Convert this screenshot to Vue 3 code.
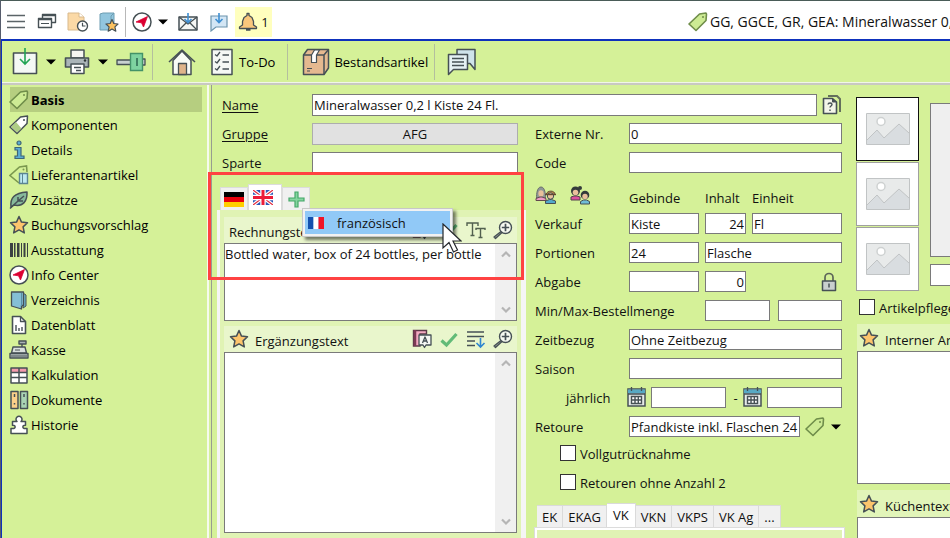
<script setup>
import { h, ref } from 'vue'

const S = 'stroke="#465055" stroke-linejoin="round"'
const starPath = 'M10 1.5l2.5 5.6 6 .7-4.4 4.1 1.2 6-5.3-3-5.3 3 1.2-6L1.500 7.800l6-.7z'
const calendar = `<rect x="1" y="2" width="17" height="17" fill="#e6ebe9" stroke="#465055" stroke-width="1.500"/><path d="M1 2.500h17v4H1z" fill="#58a9c4"/><path d="M4.500 0v4M14.500 0v4M1 7h17" stroke="#465055" stroke-width="1.300"/><path d="M4.500 9.500h10v7h-10zM4.500 13h10M8 9.500v7M11.300 9.500v7" fill="#fff" stroke="#465055" stroke-width="1.400"/>`

const icons = {
  menu: [20, 20, '<path d="M1 3.500h18M1 9.500h18M1 15.500h18" stroke="#5b6468" stroke-width="1.600"/>'],
  windows: [20, 20, `<g fill="#fff" ${S} stroke-width="1.400"><path d="M5.500 2.500h13v8h-13z"/><path d="M1.500 6.500h13v9h-13z"/></g><path d="M1.500 7.500h13M6 3.500h12" ${S} stroke-width="1.400"/><path d="M4 11.500h8" ${S}/>`],
  docClock: [22, 20, `<path d="M1 1h11l5 4v13H1z" fill="#fbd9a6" stroke="#d8b98c"/><path d="M12 1v4h5" fill="#fff" stroke="#d8b98c"/><circle cx="15.500" cy="14" r="5" fill="#fff" ${S} stroke-width="1.400"/><path d="M15.500 10.800V14h3" fill="none" ${S} stroke-width="1.200"/>`],
  bookStar: [20, 20, `<path d="M1 2l3-1h11v14l-3 3H1z" fill="#92c6de" stroke="#6d9db2"/><path d="M12 18V4l3-3" fill="none" stroke="#6d9db2"/><path d="M13 7.500l1.800 4 4.200.5-3.100 2.900.9 4.300-3.800-2.200-3.800 2.200.9-4.300L7 12l4.200-.5z" fill="#fcc25f" ${S} stroke-width="1.200"/>`],
  compass: [20, 20, `<circle cx="10" cy="10" r="9" fill="#fff" ${S} stroke-width="1.500"/><path d="M15.500 4.500L11.500 15 9.500 10.800 4 10z" fill="#dc0032" stroke="#dc0032" stroke-width=".8"/>`],
  caret: [10, 6, '<path d="M0 .5h10L5 5.500z" fill="#000"/>'],
  mail: [20, 20, `<path d="M1 5h18v13H1z" fill="#f5f6f4" ${S} stroke-width="1.500"/><path d="M1 5l9 7 9-7M1 18l7-7M19 18l-7-7" fill="none" ${S} stroke-width="1.300"/><path d="M10 1v9M6.500 7l3.500 3.500L13.500 7" fill="none" stroke="#3f8fd2" stroke-width="1.600"/>`],
  chatDown: [20, 20, '<path d="M2 4h16v11H7l-5 4z" fill="#d3e6f5" stroke="#6c94ad" stroke-width="1.200"/><path d="M10 1v9M6.500 7l3.500 3.500L13.500 7" fill="none" stroke="#3f8fd2" stroke-width="1.600"/>'],
  bell: [20, 20, `<path d="M9 1.500h2v2l3 2 1.500 4V13l3 2v1.500H1.500V15l3-2V9.500L6 5.500l3-2z" fill="#fac77c" ${S} stroke-width="1.300"/><path d="M8 17.500h4.500" stroke="#465055" stroke-width="2.500"/>`],
  tag: [20, 20, '<path d="M1 12L11.500 2l6.500-1 .5 1-.5 6.500L8 18.500z" fill="#cdeb94" stroke="#6f8d4a" stroke-width="1.600" stroke-linejoin="round"/><circle cx="15" cy="5" r="1" fill="#6f8d4a"/>'],
  tagWhite: [20, 20, `<path d="M1 12L11.500 2l7-1-.5 7.500L8 18.500z" fill="#fff" ${S} stroke-width="1.500"/><path d="M2 12l5-5 5.500 6.500L8 17.500z" fill="#aecd84"/><circle cx="15" cy="5" r="1" fill="#465055"/>`],
  info: [20, 20, '<g fill="#5badd3" stroke="#3f6678" stroke-width="1.200"><circle cx="10" cy="3" r="2"/><path d="M6 7.500h6V16h3v2.500H6V16h2.500v-6H6z"/></g>'],
  supplier: [20, 20, '<path d="M10 18L1 10.500 10.500 2l7-1 .5 6" fill="none" stroke="#7b984f" stroke-width="1.600"/><circle cx="14.500" cy="4.500" r="1" fill="#7b984f"/><path d="M10.500 8.500h8v10h-8z" fill="#bdeaf2" stroke="#5b8593" stroke-width="1.400"/><path d="M13.500 9v9" stroke="#5b8593"/>'],
  leaf: [20, 20, `<path d="M2 17C1 8 5 3 18 2c.5 9-4 15-13 13z" fill="#86b99b" ${S} stroke-width="1.500"/><path d="M1 18.500L9 11l6-5M9 7v4h5" fill="none" ${S} stroke-width="1.500"/>`],
  star: [20, 20, `<path d="${starPath}" fill="#fdc56c" ${S} stroke-width="1.500"/>`],
  barcode: [20, 20, '<path d="M1 3h3v14H1zM5 3h1.500v14H5zM8 3h2.500v14H8zM12 3h1v14h-1zM14.500 3h2v14h-2zM18 3h1v14h-1z" fill="#3a4142"/>'],
  folder: [20, 20, `<path d="M14 3l3 2v11l-3 2z" fill="#6fb0c8" ${S}/><path d="M2.500 2h12v13.500h-2V19l-10-3z" fill="#84bfd6" ${S} stroke-width="1.300"/><path d="M12.500 3v13" stroke="#5a8ea3"/>`],
  sheet: [20, 20, `<path d="M3.500 1.500h8l5 5v12h-13z" fill="#fff" ${S} stroke-width="1.600"/><path d="M11.500 1.500v5h5" fill="none" ${S} stroke-width="1.300"/><path d="M7 10v6M10 13v3M13 12v4" stroke="#465055" stroke-width="1.400"/>`],
  register: [20, 20, `<path d="M10 1h7v3h-7zM13 4v3" fill="#a9b4b5" ${S} stroke-width="1.400"/><path d="M4 7h12l1.500 6h-15z" fill="#d8dfdd" ${S} stroke-width="1.400"/><path d="M1 13.500h18V18H1z" fill="#b6c1c0" ${S} stroke-width="1.400"/><path d="M6 10h5M2 16h16" stroke="#465055"/>`],
  table: [20, 20, `<path d="M2 3h16v15H2z" fill="#fff"/><path d="M2 3h16v4H2z" fill="#f39aac"/><path d="M2 3h16v15H2zM2 7.500h16M2 12.500h16M10 3v15" fill="none" ${S} stroke-width="1.500"/>`],
  binders: [20, 20, `<path d="M2 1.500h7v17H2z" fill="#fbd08a" ${S} stroke-width="1.500"/><path d="M11.500 1.500h7v17h-7z" fill="#a9d3b4" ${S} stroke-width="1.500"/><path d="M5.500 4v3M15 4v3M5.500 13v1.500M15 13v1.500" stroke="#465055" stroke-width="1.500"/>`],
  puzzle: [20, 20, `<path d="M8 6.500a3 3 0 1 1 4 0H16.500v3.800c-3.500-.5-3.500 3.700 0 3.200H18v5H2v-5h1.500c3.500.5 3.500-3.700 0-3.200V6.500z" fill="#fff" ${S} stroke-width="1.500"/>`],
  save: [26, 28, `<path d="M1.500 5h23v20.500h-23z" fill="#f4f8f5" ${S} stroke-width="1.600"/><path d="M13 0v16M8 11l5 5 5-5" fill="none" stroke="#22a455" stroke-width="1.600"/>`],
  printer: [26, 26, `<path d="M7 1h13v8H7z" fill="#f5f5f2" ${S} stroke-width="1.500"/><path d="M1.500 9h23v9h-23z" fill="#aab4b8" ${S} stroke-width="1.600"/><path d="M7 15h13v9.500H7z" fill="#fff" ${S} stroke-width="1.500"/><path d="M10 18.500h7M12 21.500h5" stroke="#465055" stroke-width="1.300"/><circle cx="21" cy="11.500" r="1.200" fill="#2d3436"/>`],
  plug: [30, 20, `<path d="M1 8h14v4.500H1zM26 7h3v6h-3z" fill="#c8d0d0" ${S} stroke-width="1.300"/><path d="M14.500 1.500h12v17h-12z" fill="#7ed3a0" stroke="#439268" stroke-width="1.400"/><path d="M21 6v8" stroke="#2b6650" stroke-width="1.500"/>`],
  house: [28, 28, `<path d="M5 12.500v14h18v-14L14 3z" fill="#f8fbf5" ${S} stroke-width="1.500"/><path d="M1 14L14 2l13 12" fill="none" ${S} stroke-width="1.600"/><path d="M10.500 15.500h8v11h-8z" fill="#dfb48a" ${S} stroke-width="1.300"/>`],
  checklist: [22, 28, `<path d="M1 1.500h20v25H1z" fill="#f5f8f5" ${S} stroke-width="1.500"/><path d="M4 6.500l2 1.500 3-4M4 13.500l2 1.500 3-4M4 20.500l2 1.500 3-4" fill="none" ${S} stroke-width="1.300"/><path d="M11.500 7h6.500M11.500 14h6.500M11.500 21h6.500" stroke="#465055" stroke-width="1.300"/>`],
  box: [28, 28, `<path d="M1.500 7l4-5.500h21V20L22 26.500H1.500z" fill="#e5b990" ${S} stroke-width="1.500"/><path d="M1.500 7H22v19.500M22 7l4.500-5.500" fill="none" ${S} stroke-width="1.500"/><path d="M9.500 7l3-5h5l-3 5v7.500h-5z" fill="#fff" ${S} stroke-width="1.200"/><path d="M5 20.500h5M5 23h3" stroke="#465055" stroke-width="1.200"/>`],
  chats: [30, 28, `<path d="M10 1.500h18v20l-5-6H10z" fill="#cfe3ea" ${S} stroke-width="1.500"/><path d="M1.500 6.500h19v15h-14l-5 5z" fill="#e5f0f3" ${S} stroke-width="1.500"/><path d="M5 10.500h12M5 14h12M5 17.500h12" stroke="#465055" stroke-width="1.400"/>`],
  docHelp: [20, 20, `<path d="M6 1h9l3 3v13" fill="none" stroke="#64705c" stroke-width="2"/><path d="M1.500 3.500h9L14.500 7v11.500h-13z" fill="#f3f5e9" ${S} stroke-width="1.600"/><path d="M10.500 3.500V7h4" fill="#465055" ${S}/><path d="M6 9.500c.2-2 4-2 4 0 0 1.500-2 1.500-2 3M8 14.500v1.500" fill="none" stroke="#465055" stroke-width="1.400"/>`],
  adults: [22, 20, '<path d="M1.500 13c0-4 .5-11 4.500-11s4.500 7 4.500 11z" fill="#8f9795" stroke="#6b6f6c"/><ellipse cx="6" cy="8.500" rx="2.600" ry="3.200" fill="#e9c09c"/><path d="M1 15.500v-2l4-1.500h2l4 1.500v2z" fill="#ee9cc4" stroke="#63484f"/><path d="M11 9.500c1-4.500 9-4.500 9 0z" fill="#b98449" stroke="#624a32"/><circle cx="15.500" cy="11" r="3.200" fill="#e9c09c" stroke="#465055"/><path d="M10 9.500h11" stroke="#624a32" stroke-width="1.400"/><path d="M10.500 18.500V16l4-1.500h2l4 1.500v2.500z" fill="#52a9cc" stroke="#465055"/>'],
  kids: [22, 20, '<circle cx="6.500" cy="6" r="4.500" fill="#343b3b"/><circle cx="11" cy="3" r="2" fill="#343b3b"/><circle cx="6.500" cy="7.500" r="2.800" fill="#e9c09c"/><path d="M2 15v-3l3-1h3l3 1v3z" fill="#dc4f9d" stroke="#52404c"/><circle cx="16" cy="10" r="4.300" fill="#343b3b"/><circle cx="16" cy="11.500" r="2.700" fill="#e9c09c"/><path d="M11.500 19v-2.500l3-1.500h3l3 1.500V19z" fill="#70bdd6" stroke="#465055"/>'],
  lock: [16, 20, `<path d="M4 9V5.500a4 4 0 0 1 8 0V9" fill="none" stroke="#5c6558" stroke-width="1.700"/><path d="M1.500 9h13v9.500h-13z" fill="#c9cfce" ${S} stroke-width="1.500"/><path d="M8 11.500v4" stroke="#465055" stroke-width="1.500"/>`],
  calendar: [19, 20, calendar],
  dict: [20, 20, `<path d="M1.500 1.500h13V5H8v12H1.500z" fill="#f4abc2" stroke="#5c3a48" stroke-width="1.400"/><path d="M3 1v16" stroke="#7c3a54" stroke-width="2.500"/><path d="M7 6h12v10h-5l-1.500 2.500L11 16H7z" fill="#f6f8f4" ${S} stroke-width="1.300"/><path d="M10.500 14l2.500-6 2.500 6M11.500 12h3" fill="none" ${S} stroke-width="1.300"/>`],
  check: [20, 20, '<path d="M2.500 11.500l5 4.500L17.500 5" fill="none" stroke="#62bb78" stroke-width="3.200"/>'],
  sortDown: [20, 20, '<path d="M1 3h17M1 7.500h17M1 12h8M1 16.500h8" stroke="#465055" stroke-width="1.500"/><path d="M14.500 9v9M10.500 14l4 4 4-4" fill="none" stroke="#2f86d0" stroke-width="1.600"/>'],
  textSize: [20, 20, '<path d="M1 6V3h11v3M6.500 3v12M4.500 15.500h4M10 10V8.500h9V10M14.500 8.500v9M12.500 17.500h4" fill="none" stroke="#52604f" stroke-width="1.400"/>'],
  zoomIn: [20, 20, `<path d="M8 11.500l1 1-6.500 6L1 17z" fill="#9fa89c" ${S} stroke-width="1.300"/><circle cx="12.500" cy="7.500" r="6" fill="#f7faf1" ${S} stroke-width="1.400"/><path d="M12.500 3.800v7.400M8.800 7.500h7.400" stroke="#465055" stroke-width="1.700"/>`],
  german: [20, 15, '<path d="M0 0h20v5H0z" fill="#000"/><path d="M0 5h20v5H0z" fill="#e8000c"/><path d="M0 10h20v5H0z" fill="#ffce00"/>'],
  british: [20, 15, '<path d="M0 0h20v15H0z" fill="#2a57b8"/><path d="M0 0l20 15M20 0L0 15" stroke="#fff" stroke-width="3.500"/><path d="M0 0l20 15M20 0L0 15" stroke="#e4283c" stroke-width="1.200"/><path d="M10 0v15M0 7.500h20" stroke="#fff" stroke-width="5.500"/><path d="M10 0v15M0 7.500h20" stroke="#ec1c38" stroke-width="3"/>'],
  french: [16, 12, '<path d="M0 0h5.500v12H0z" fill="#1450ae"/><path d="M5.500 0h5v12h-5z" fill="#fff"/><path d="M10.500 0H16v12h-5.500z" fill="#f01428"/>'],
  plus: [17, 17, '<path d="M7 1h3v6h6v3h-6v6H7v-6H1V7h6z" fill="#86d5a0" stroke="#45a869" stroke-width="1.200"/>'],
  up: [10, 8, '<path d="M1 6.500l4-4 4 4" fill="none" stroke="#b5b5b5" stroke-width="2.200"/>'],
  down: [10, 8, '<path d="M1 1.500l4 4 4-4" fill="none" stroke="#b5b5b5" stroke-width="2.200"/>'],
  photo: [44, 32, '<path d="M.5.5h43v31H.5z" fill="#e8eaea" stroke="#c1c4c5"/><path d="M1 27l10-10 7 8 15-14 10 9v11H1z" fill="#d9dde0"/><path d="M1 27l10-10 7 8 15-14 10 9" fill="none" stroke="#c1c4c5"/><circle cx="15" cy="8.500" r="4" fill="#fff" stroke="#ced1d1" stroke-width="1.500"/>'],
  pointer: [20, 30, '<path d="M1 1v24l6-5.500 4.500 9.500 4-2-4.500-9H19z" fill="#fff" stroke="#24272b" stroke-width="1.200"/>']
}

const Icon = ({ name }) => {
  const [w, ht, body] = icons[name]
  return h('svg', { width: w, height: ht, viewBox: `0 0 ${w} ${ht}`, 'aria-hidden': 'true', innerHTML: body })
}
Icon.props = ['name']

const nav = [
  ['tag', 'Basis'], ['tagWhite', 'Komponenten'], ['info', 'Details'], ['supplier', 'Lieferantenartikel'],
  ['leaf', 'Zusätze'], ['star', 'Buchungsvorschlag'], ['barcode', 'Ausstattung'], ['compass', 'Info Center'],
  ['folder', 'Verzeichnis'], ['sheet', 'Datenblatt'], ['register', 'Kasse'], ['table', 'Kalkulation'],
  ['binders', 'Dokumente'], ['puzzle', 'Historie']
]
const priceTabs = ['EK', 'EKAG', 'VK', 'VKN', 'VKPS', 'VK Ag', '...']
const page = ref('Basis')
const priceTab = ref('VK')
const photo = ref(1)
const text = ref('Bottled water, box of 24 bottles, per bottle')
</script>

<template>
  <div class="app">
    <header class="titlebar">
      <button class="tool"><Icon name="menu" /></button>
      <button class="tool"><Icon name="windows" /></button>
      <button class="tool"><Icon name="docClock" /></button>
      <button class="tool"><Icon name="bookStar" /></button>
      <span class="sep"></span>
      <button class="tool"><Icon name="compass" /></button>
      <button class="tool drop"><Icon name="caret" /></button>
      <button class="tool"><Icon name="mail" /></button>
      <button class="tool"><Icon name="chatDown" /></button>
      <button class="tool alert"><Icon name="bell" />1</button>
      <h1 class="title"><Icon name="tag" />GG, GGCE, GR, GEA: Mineralwasser 0,2 l Kiste 24 Fl.</h1>
    </header>

    <div class="window">
      <div class="toolbar">
        <div class="group first">
          <button class="tool"><Icon name="save" /></button>
          <button class="tool"><Icon name="caret" /></button>
          <button class="tool"><Icon name="printer" /></button>
          <button class="tool"><Icon name="caret" /></button>
          <button class="tool"><Icon name="plug" /></button>
        </div>
        <div class="group">
          <button class="tool house"><Icon name="house" /></button>
          <button class="tool"><Icon name="checklist" />To-Do</button>
        </div>
        <div class="group stock"><button class="tool"><Icon name="box" />Bestandsartikel</button></div>
        <div class="group last"><button class="tool"><Icon name="chats" /></button></div>
      </div>

      <div class="body">
        <nav class="sidebar">
          <a v-for="[icon, label] in nav" :key="label" href="#" :class="{ active: page === label }" @click.prevent="page = label">
            <span class="slot"><Icon :name="icon" /></span>{{ label }}
          </a>
        </nav>

        <main class="main">
          <section class="form">
            <div class="row name">
              <label for="name" class="link">Name</label>
              <input id="name" value="Mineralwasser 0,2 l Kiste 24 Fl.">
              <button class="tool"><Icon name="docHelp" /></button>
            </div>
            <div class="columns">
              <div class="texts">
                <div class="row"><label for="group" class="link">Gruppe</label><button id="group" class="select">AFG</button></div>
                <div class="row"><label for="branch">Sparte</label><input id="branch"></div>

                <div class="languages">
                  <div class="tabs">
                    <button class="tab" aria-label="deutsch"><Icon name="german" /></button>
                    <button class="tab on" aria-label="englisch"><Icon name="british" /></button>
                    <button class="tab" aria-label="neu"><Icon name="plus" /></button>
                  </div>
                  <div class="pane">
                    <div class="band">
                      <label for="invoice">Rechnungstext</label>
                      <span class="tools">
                        <button class="tool"><Icon name="dict" /></button><button class="tool"><Icon name="check" /></button>
                        <button class="tool"><Icon name="textSize" /></button><button class="tool"><Icon name="zoomIn" /></button>
                      </span>
                    </div>
                    <div class="area short">
                      <textarea id="invoice" v-model="text" spellcheck="false"></textarea>
                      <div class="scroll"><Icon name="up" /><Icon name="down" /></div>
                    </div>
                    <div class="band">
                      <Icon name="star" /><label for="extra">Ergänzungstext</label>
                      <span class="tools">
                        <button class="tool"><Icon name="dict" /></button><button class="tool"><Icon name="check" /></button>
                        <button class="tool"><Icon name="sortDown" /></button><button class="tool"><Icon name="zoomIn" /></button>
                      </span>
                    </div>
                    <div class="area tall">
                      <textarea id="extra"></textarea>
                      <div class="scroll"><Icon name="up" /><Icon name="down" /></div>
                    </div>
                  </div>
                  <div class="menu" role="menu">
                    <button role="menuitem"><Icon name="french" />französisch</button>
                  </div>
                  <div class="frame"></div>
                  <div class="pointer"><Icon name="pointer" /></div>
                </div>
              </div>

              <div class="details">
                <div class="row"><label for="ext">Externe Nr.</label><input id="ext" value="0"></div>
                <div class="row"><label for="code">Code</label><input id="code"></div>
                <div class="row heads">
                  <span class="people"><Icon name="adults" /><Icon name="kids" /></span>
                  <span class="c1">Gebinde</span><span class="c2">Inhalt</span><span>Einheit</span>
                </div>
                <div class="row"><label for="sale">Verkauf</label><input id="sale" class="c1" value="Kiste"><input class="c2 num" aria-label="Inhalt" value="24"><input aria-label="Einheit" value="Fl"></div>
                <div class="row"><label for="portions">Portionen</label><input id="portions" class="c1" value="24"><input aria-label="Portionseinheit" value="Flasche"></div>
                <div class="row"><label for="issue">Abgabe</label><input id="issue" class="c1"><input class="c2 num" aria-label="Abgabemenge" value="0"><button class="tool lock"><Icon name="lock" /></button></div>
                <div class="row"><label for="min" class="wide">Min/Max-Bestellmenge</label><input id="min"><input class="max" aria-label="Max-Bestellmenge"></div>
                <div class="row"><label for="time">Zeitbezug</label><input id="time" value="Ohne Zeitbezug"></div>
                <div class="row"><label for="season">Saison</label><input id="season"></div>
                <div class="row dates">
                  <label for="from" class="yearly">jährlich</label>
                  <button class="tool"><Icon name="calendar" /></button><input id="from">
                  <span>-</span>
                  <button class="tool"><Icon name="calendar" /></button><input aria-label="bis">
                </div>
                <div class="row"><label for="return">Retoure</label><input id="return" value="Pfandkiste inkl. Flaschen 24"><button class="tool"><Icon name="tag" /></button><button class="tool"><Icon name="caret" /></button></div>
                <label class="row check"><input type="checkbox">Vollgutrücknahme</label>
                <label class="row check"><input type="checkbox">Retouren ohne Anzahl 2</label>
                <div class="price">
                  <div class="price-tabs">
                    <button v-for="t in priceTabs" :key="t" :class="{ on: priceTab === t }" @click="priceTab = t">{{ t }}</button>
                  </div>
                  <div class="price-pane"></div>
                </div>
              </div>
            </div>
          </section>

          <aside class="extras">
            <div class="media">
              <div class="thumbs">
                <button v-for="n in 3" :key="n" :class="{ on: photo === n }" :aria-label="'Bild ' + n" @click="photo = n"><Icon name="photo" /></button>
              </div>
              <div class="preview"><div class="image"></div><input aria-label="Bildtext"></div>
            </div>
            <label class="row care"><input type="checkbox">Artikelpflege</label>
            <div class="note">
              <div class="band"><Icon name="star" /><label for="internal">Interner Artikeltext</label></div>
              <textarea id="internal"></textarea>
            </div>
            <div class="note">
              <div class="band"><Icon name="star" /><label for="kitchen">Küchentext</label></div>
              <textarea id="kitchen"></textarea>
            </div>
          </aside>
        </main>
      </div>
    </div>
  </div>
</template>

<style>
body { overflow: hidden; }
</style>

<style scoped>
.app { height: 100vh; display: flex; flex-direction: column; overflow: hidden; box-sizing: border-box; border-top: 1px solid #4a5c58; border-left: 1px solid #565c6c; background: #d5f198; color: #111; font: 13px/18px "Open Sans", "Noto Sans", sans-serif; }
.app *, .app *::before { box-sizing: border-box; }
svg { display: block; flex: none; }
button, input, textarea { font: inherit; color: inherit; margin: 0; border-radius: 0; }
button { cursor: pointer; }
.tool { display: flex; align-items: center; justify-content: center; gap: 6px; flex: none; padding: 0; border: 0; background: none; }

.titlebar { display: flex; flex: none; align-items: center; gap: 11px; height: 38px; padding: 4px 0 0 5px; background: #fff; }
.titlebar .tool { width: 20px; height: 30px; }
.titlebar .drop { width: 10px; margin: 0 -1px 0 -5px; }
.sep { width: 1px; height: 30px; margin: 0 -5px; background: #b8b8b8; }
.titlebar .alert { width: 37px; margin-left: -5px; gap: 3px; background: #ffffbe; }
.title { display: flex; align-items: center; gap: 2px; flex: 0 0 262px; margin: 0 0 0 auto; overflow: hidden; white-space: nowrap; font: inherit; font-size: 14px; }

.window { flex: 1; min-height: 0; display: flex; flex-direction: column; border-top: 2px solid #0e31bd; border-left: 1px solid #0e31bd; }
.toolbar { display: flex; flex: none; align-items: center; height: 44px; border-bottom: 2px solid #c9c9c2; box-shadow: inset 0 -1px #f1f6e8; }
.group { display: flex; align-items: center; height: 36px; padding: 0 12px 0 15px; border-right: 1px solid #b4bf9e; }
.group .tool { color: #000; }
.group.first { gap: 8px; padding: 0 6px 0 10px; }
.group .house { margin-right: 15px; }
.group.stock { padding: 0 6px 0 14px; }
.group.stock .tool { gap: 4px; }
.group.last { padding-left: 12px; border: 0; }

.body { flex: 1; min-height: 0; display: flex; }
.sidebar { flex: 0 0 205px; padding: 2px 5px 0 8px; }
.sidebar a { display: flex; align-items: center; height: 25px; gap: 3px; color: #000; text-decoration: none; }
.sidebar a.active { background: #b6ce80; font-weight: 700; }
.slot { display: flex; justify-content: center; width: 19px; margin-left: -1px; }

.main { flex: 1; min-width: 0; display: flex; border-left: 2px solid #f6faee; }
.form { flex: 0 0 638px; min-width: 0; padding: 9px 3px 0 13px; box-shadow: inset 2px 0 #d5f198, inset 3px 0 #989c90; }
.row { display: flex; align-items: flex-start; height: 29px; }
.row > label { flex: 0 0 90px; padding-top: 2px; }
.row input, .preview input { flex: 1; width: 0; min-width: 0; height: 22px; padding: 0 1px; border: 1px solid #7a7a7a; background: #fff; outline: 0; }
.link { text-decoration: underline; text-underline-offset: 2px; }
.name { padding-right: 2px; }
.name .tool { width: 20px; margin-left: 6px; }
.columns { display: flex; }
.texts { flex: 0 0 304px; }
.texts > .row { padding-right: 8px; }
.select { flex: 1; height: 22px; padding: 0; border: 1px solid #adadad; background: #e1e1e1; }

.languages { position: relative; margin: 3px 0 0 -5px; }
.tabs { display: flex; align-items: flex-end; height: 26px; padding-left: 3px; }
.tab { display: flex; align-items: center; justify-content: center; width: 28px; height: 23px; padding: 0; border: 1px solid #dcdcdc; border-bottom: 0; background: #f0f0f0; }
.tab.on { width: 34px; height: 26px; padding: 0 5px 0 0; background: #fff; }
.pane { width: 309px; padding: 7px 4px 5px 4px; border: solid; border-width: 0 5px 0 3px; border-color: #f5f5f5; background: #e0f3b4; }
.band { display: flex; align-items: center; height: 26px; padding: 0 4px 0 5px; background: #e9f6cc; }
.band label { padding: 4px 0 0; }
.band svg + label { margin-left: 6px; }
.tools { display: flex; gap: 7px; margin-left: auto; }
.area { display: flex; border: 1px solid #7a7a7a; background: #fff; }
.area + .band { margin-top: 5px; }
textarea { display: block; padding: 1px 0; border: 0; resize: none; outline: 0; overflow: hidden; background: #fff; }
.area textarea { flex: 1; min-width: 0; }
.short { height: 78px; }
.tall { height: 181px; }
.scroll { display: flex; flex-direction: column; justify-content: space-between; align-items: center; width: 21px; padding: 6px 0; background: #f0f0f0; }

.menu { position: absolute; z-index: 2; left: 85px; top: 24px; width: 151px; padding: 2px; border: 1px solid #c8c8c8; background: #f2f2f2; box-shadow: 3px 3px 3px rgb(0 0 0 / 50%); }
.menu button { display: flex; align-items: center; gap: 13px; width: 100%; height: 23px; padding: 0 3px; border: 0; background: #91c9f7; }
.frame { position: absolute; z-index: 1; left: -9px; top: -12px; width: 316px; height: 108px; border: 3px solid #ff4242; pointer-events: none; }
.pointer { position: absolute; z-index: 3; left: 225px; top: 39px; pointer-events: none; }

.details { flex: 1; min-width: 0; padding-left: 9px; }
.details .row { padding-right: 2px; }
.details .row > label { flex-basis: 94px; }
.details .row input { height: 21px; }
.details .row.heads { height: 32px; padding-top: 4px; }
.heads > span { padding-top: 4px; }
.heads > .people { display: flex; flex: 0 0 94px; gap: 12px; padding: 0; }
.details .row .c1 { flex: 0 0 70px; margin-right: 6px; }
.details .row .c2 { flex: 0 0 41px; margin-right: 6px; }
.row .num { text-align: right; }
.details .row > .wide { flex-basis: 170px; }
.details .row .max { margin-left: 8px; flex-grow: 1; }
.dates > .tool { margin: 0 5px 0 -2px; }
.details .row > .yearly { padding-left: 31px; }
.dates > span { width: 19px; text-align: center; padding-top: 2px; }
.row > input + .tool { height: 21px; margin-left: 5px; }
.row > .tool + .tool { height: 21px; margin: 0 1px 0 6px; }
.dates > input + .tool { margin-left: 0; }
.row > .lock.tool { margin: 0 5px 0 auto; }
.details .row.check { padding-left: 25px; gap: 4px; }
.row input[type="checkbox"] { appearance: none; flex: 0 0 16px; height: 16px; padding: 0; border: 1px solid #333; }
.row input[type="checkbox"]:checked { background: #333; box-shadow: inset 0 0 0 3px #fff; }
.price-tabs { display: flex; align-items: flex-end; height: 25px; padding-left: 2px; }
.price-tabs button { height: 23px; padding: 0 5px; border: 1px solid #dadada; border-width: 1px 1px 0 0; background: #f0f0f0; }
.price-tabs .on { height: 25px; padding: 0 6px 3px; background: #fff; }
.price-pane { height: 60px; border: 2px solid #fff; outline: 1px solid #dcdcdc; background: #e0f3b4; }

.extras { flex: 1; min-width: 0; padding: 12px 0 0 10px; }
.media { display: flex; gap: 11px; height: 202px; }
.thumbs { display: flex; flex-direction: column; gap: 1px; flex: 0 0 63px; margin-left: -1px; }
.thumbs button { display: flex; align-items: center; justify-content: center; height: 64px; padding: 0; border: 1px solid #a0a0a0; background: #fff; }
.thumbs .on { border-color: #111; }
.preview { flex: 1 0 160px; padding-top: 6px; }
.image { height: 154px; margin-bottom: 7px; border: 1px solid #7a7a7a; background: #efefef; }
.preview input { width: 100%; }
.care { height: 25px; gap: 4px; padding-left: 2px; white-space: nowrap; }
.extras .note { width: 320px; margin-bottom: 6px; }
.note .band { height: 27px; padding-left: 2px; background: #e2f5b9; }
.note .band label { white-space: nowrap; }
.note textarea { width: 100%; height: 133px; border: 1px solid #7a7a7a; }
</style>
